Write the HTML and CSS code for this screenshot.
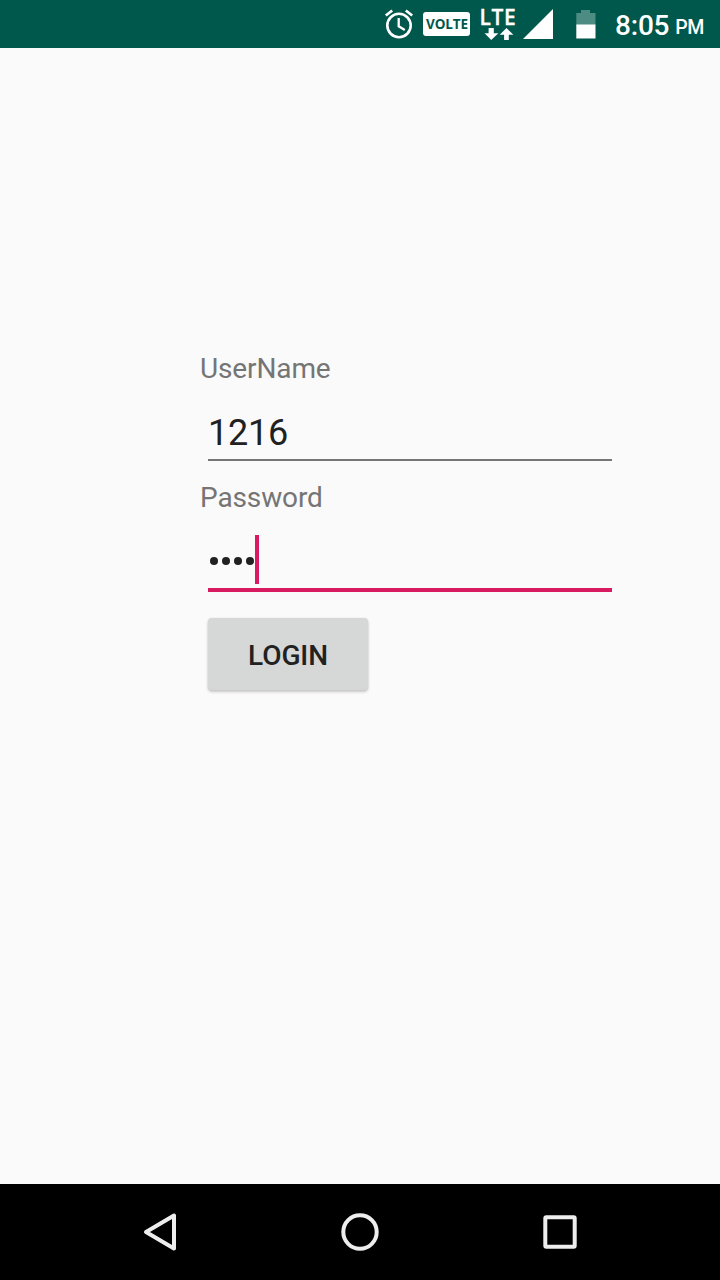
FILE: index.html
```html
<!DOCTYPE html>
<html lang="en">
<head>
<meta charset="utf-8">
<title>Login</title>
<link rel="stylesheet" href="styles.css">
</head>
<body>
<div class="screen">
  <header class="status-bar">
    <svg class="alarm" width="30" height="32" viewBox="384 9 30 32" fill="none" stroke="#fff" stroke-width="2.6">
      <circle cx="399" cy="25.5" r="11.7"/>
      <path d="M385.8 15.6L392.2 10.4M405.8 10.4L412.2 15.6"/>
      <path d="M398.7 18V26.3L404.8 30" stroke-width="2.3"/>
    </svg>
    <span class="volte">VOLTE</span>
    <div class="network">
      <span class="lte">LTE</span>
      <svg class="arrows" width="30" height="12" viewBox="484 28 30 12" fill="#fff">
        <path d="M488.6 28h5.2v5.3h4.6L491.2 40 484.6 33.3h4zM506.5 28l6.9 6.7h-4.6V40h-4.7v-5.3h-4.4z"/>
      </svg>
    </div>
    <svg class="signal" width="30" height="30" viewBox="0 0 30 30"><path d="M30 0V30H0z" fill="#fff"/></svg>
    <svg class="battery" width="20" height="29" viewBox="0 0 20 29">
      <path d="M5 0h9v3h5.5v12H.3V3H5z" fill="#4d8c82"/>
      <path d="M.3 14.5h19.2v14H.3z" fill="#fff"/>
    </svg>
    <span class="clock">8:05</span><span class="meridiem">PM</span>
  </header>
  <main class="form">
    <label class="label">UserName</label>
    <div class="field"><span class="value">1216</span></div>
    <label class="label label-password">Password</label>
    <div class="field field-active">
      <span class="dots"><i class="dot"></i><i class="dot"></i><i class="dot"></i><i class="dot"></i></span>
      <span class="caret"></span>
    </div>
    <button class="login">LOGIN</button>
  </main>
  <nav class="nav-bar">
    <svg width="40" height="40" viewBox="0 0 40 40"><path d="M34 3.5V36.5L6 20z"/></svg>
    <svg width="40" height="40" viewBox="0 0 40 40"><circle cx="20" cy="20" r="16.7"/></svg>
    <svg width="40" height="40" viewBox="0 0 40 40"><rect x="5.3" y="5.3" width="29.4" height="29.4" rx="1"/></svg>
  </nav>
</div>
</body>
</html>
```
FILE: styles.css
```css
* { box-sizing: border-box; }
body { margin: 0; font-family: Roboto, "Liberation Sans", sans-serif; }
.screen {
  width: 720px;
  height: 1280px;
  display: flex;
  flex-direction: column;
  background: #fafafa;
}
.status-bar {
  height: 48px;
  flex: none;
  display: flex;
  align-items: flex-start;
  padding-left: 384px;
  background: #00574b;
  color: #fff;
  white-space: nowrap;
}
.status-bar > svg { flex: none; }
.alarm { margin-top: 9px; }
.volte {
  flex: none;
  width: 47px;
  height: 24px;
  margin: 12px 0 0 8.5px;
  padding-left: 2px;
  border-radius: 3px;
  background: #fff;
  color: #00574b;
  font: bold 13.5px/24px "Open Sans", sans-serif;
  letter-spacing: -.1px;
  text-align: center;
}
.network {
  flex: none;
  width: 36px;
  margin: 6px 0 0 10.5px;
  display: flex;
  flex-direction: column;
}
.lte { font: 600 21px/22px "Open Sans", sans-serif; height: 22px; letter-spacing: .6px; margin-left: -.5px; -webkit-text-stroke: .3px #fff; }
.arrows { margin-left: 4px; }
.signal { margin: 9px 0 0 7px; }
.battery { margin: 9.5px 0 0 23px; }
.clock { margin: 9px 0 0 19px; font-size: 28px; line-height: 33px; font-weight: 500; letter-spacing: -.2px; }
.meridiem { margin: 16px 0 0 6px; font-size: 19.5px; line-height: 24px; font-weight: 500; letter-spacing: -.4px; }
.form {
  flex: 1;
  display: flex;
  flex-direction: column;
  align-items: flex-start;
  padding: 304px 0 0 200px;
}
.label { font-size: 28px; line-height: 33px; letter-spacing: -.12px; color: #757575; }
.label-password { margin-top: 20px; }
.field {
  width: 404px;
  height: 76px;
  margin-left: 8px;
  padding-top: 27px;
  border-bottom: 2px solid #757575;
}
.value { display: block; font-size: 36px; line-height: 42px; letter-spacing: -.2px; color: #212121; }
.field-active {
  height: 78px;
  padding-top: 21px;
  display: flex;
  align-items: flex-start;
  border-bottom: 4px solid #d81b60;
}
.dots { display: flex; gap: 4px; padding: 22px 0 0 2px; }
.dot { width: 8px; height: 8px; border-radius: 50%; background: #212121; }
.caret { width: 4px; height: 49px; margin-left: 1px; background: #d81b60; }
.login {
  width: 160px;
  height: 72px;
  margin: 26px 0 0 8px;
  padding: 3px 0 0;
  border: 0;
  border-radius: 4px;
  background: #d6d7d7;
  box-shadow: 0 2px 3px rgba(0, 0, 0, .2), 0 0 2px rgba(0, 0, 0, .1);
  color: #212121;
  font: 500 28px/33px Roboto, sans-serif;
  letter-spacing: -.1px;
}
.nav-bar {
  height: 96px;
  flex: none;
  display: flex;
  align-items: center;
  justify-content: center;
  gap: 160px;
  background: #000;
  fill: none;
  stroke: #eee;
  stroke-width: 4;
  stroke-linejoin: round;
}
```
